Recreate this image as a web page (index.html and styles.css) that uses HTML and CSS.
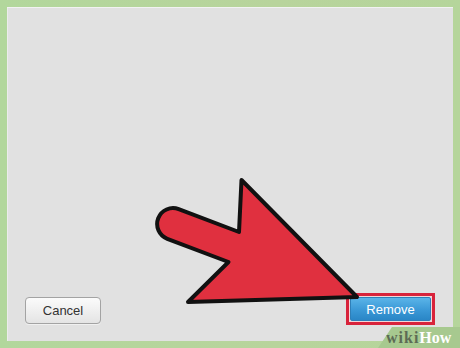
FILE: index.html
```html
<!DOCTYPE html>
<html>
<head>
<meta charset="utf-8">
<link rel="stylesheet" href="styles.css">
</head>
<body>
<div class="frame">
  <div class="panel">
    <div class="footer">
      <button class="btn cancel">Cancel</button>
      <div class="highlight"><button class="btn remove">Remove</button></div>
    </div>
  </div>
  <svg class="arrow" width="460" height="348" viewBox="0 0 460 348">
    <path d="M178.7,209.2 L239,232 L241.5,180 L357,297 L188,302 L228.5,262 L167.3,238.8 A15.8,15.8 0 0 1 178.7,209.2 Z" fill="#e0303f" stroke="#111" stroke-width="4" stroke-linejoin="round"/>
  </svg>
  <div class="brand"><span class="wiki">wiki</span><span class="how">How</span></div>
</div>
</body>
</html>
```
FILE: styles.css
```css
html, body {
  margin: 0;
  padding: 0;
}
body {
  width: 460px;
  height: 348px;
  overflow: hidden;
  background: #b4d69d;
  font-family: "Liberation Sans", Arial, sans-serif;
}
.frame {
  position: relative;
  width: 460px;
  height: 348px;
  padding: 7px;
  box-sizing: border-box;
  background: linear-gradient(90deg, #b2d79c 0%, #b8d49c 60%, #b5d59b 100%);
}
.panel {
  height: 100%;
  background: #e1e1e1;
  box-shadow: inset 0 1px 0 #f2f2f2, inset 1px 0 0 #ececec;
  display: flex;
  flex-direction: column;
  justify-content: flex-end;
}
.footer {
  display: flex;
  justify-content: space-between;
  align-items: flex-end;
  padding: 0 18px 16px 18px;
}
.btn {
  font-family: "Liberation Sans", Arial, sans-serif;
  font-size: 13px;
  margin: 0;
  cursor: default;
}
.cancel {
  width: 76px;
  height: 27px;
  margin-bottom: 1px;
  border: 1px solid #a3a3a3;
  border-radius: 4px;
  color: #333;
  background: linear-gradient(#fbfbfb, #e4e4e4);
  box-shadow: 0 1px 0 #f0f0f0;
}
.highlight {
  border: 3px solid #d8233b;
  padding: 1px;
  background: #f1d7da;
  display: flex;
}
.remove {
  width: 81px;
  height: 24px;
  border: 1px solid #2f7fb8;
  border-radius: 2px;
  color: #fff;
  background: linear-gradient(#5ab4e8, #3a98d6 55%, #2a86c6);
  padding: 0;
}
.arrow {
  position: absolute;
  left: 0;
  top: 0;
}
.brand {
  position: absolute;
  right: 0;
  bottom: 0;
  width: 82px;
  height: 21px;
  background: #a7c98f;
  clip-path: polygon(14px 0, 100% 0, 100% 100%, 0 100%);
  font-family: "Liberation Serif", "Times New Roman", serif;
  font-weight: bold;
  font-size: 16px;
  line-height: 22px;
  padding-left: 8px;
  box-sizing: border-box;
  white-space: nowrap;
}
.wiki {
  color: #5d6b55;
  letter-spacing: 1px;
}
.how {
  color: #ffffff;
}
```
